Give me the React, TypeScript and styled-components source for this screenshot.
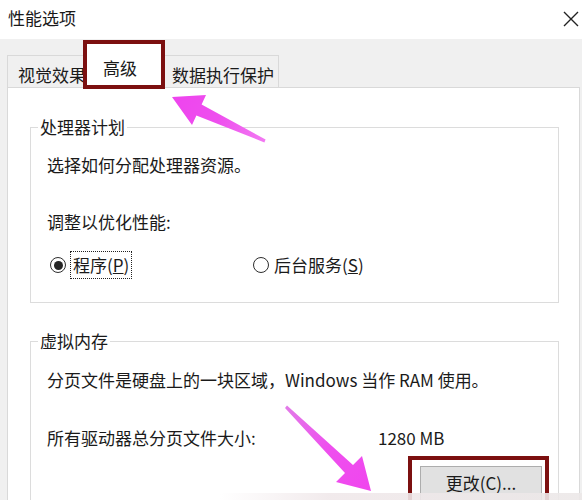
import React from 'react';
import styled, { createGlobalStyle } from 'styled-components';

const Global = createGlobalStyle`
  html, body { margin: 0; padding: 0; background: #f0f0f0; }
  body { font-family: "Noto Sans CJK SC", "Microsoft YaHei", sans-serif; color: #1a1a1a; }
  #root { width: 582px; height: 500px; overflow: hidden; }
`;

const Window = styled.div`
  position: relative;
  width: 582px;
  height: 500px;
  overflow: hidden;
  background: #f0f0f0;
  display: flex;
  flex-direction: column;
  font-size: 17px;
  line-height: 22px;
`;

const TitleBar = styled.div`
  box-sizing: border-box;
  height: 39px;
  flex: none;
  background: #fff;
  display: flex;
  align-items: center;
  justify-content: space-between;
  padding: 0 3px 4px 8px;
`;

const Close = styled.svg`
  width: 16px;
  height: 16px;
  margin-top: 2px;
`;

const TabStrip = styled.div`
  flex: none;
  height: 48px;
  display: flex;
  align-items: flex-end;
  padding-left: 7px;
  position: relative;
  z-index: 1;
`;

const Tab = styled.div<{ $w: number; $pl: number; $active?: boolean }>`
  box-sizing: border-box;
  width: ${(p) => p.$w}px;
  padding-left: ${(p) => p.$pl}px;
  border: 1px solid #d9d9d9;
  border-bottom: none;
  white-space: nowrap;
  background: ${(p) => (p.$active ? '#fff' : '#f0f0f0')};
  height: ${(p) => (p.$active ? 45 : 32)}px;
  padding-top: ${(p) => (p.$active ? 13 : 8)}px;
  margin: ${(p) => (p.$active ? '0 -2px -1px -2px' : '0')};
  position: relative;
  z-index: ${(p) => (p.$active ? 2 : 1)};
`;

const Panel = styled.div`
  flex: 1;
  background: #fff;
  border: 1px solid #d9d9d9;
  margin: 0 2px 0 7px;
  padding: 28px 20px 0 22px;
  display: flex;
  flex-direction: column;
`;

const Group = styled.fieldset<{ $mt?: number }>`
  margin: ${(p) => p.$mt ?? 0}px 0 0 0;
  padding: 0 0 ${(p) => (p.$mt ? 40 : 23)}px 16px;
  border: 1px solid #dcdcdc;
  min-width: 0;
`;

const Legend = styled.legend`
  padding: 0 2px;
  margin-left: -9px;
  line-height: 22px;
`;

const Line = styled.div<{ $mt: number }>`
  margin-top: ${(p) => p.$mt}px;
  height: 22px;
  white-space: nowrap;
`;

const RadioRow = styled.div`
  margin-top: 18px;
  margin-left: 3px;
  display: flex;
  align-items: center;
  height: 28px;
`;

const Option = styled.div<{ $w?: number }>`
  display: flex;
  align-items: center;
  gap: ${(p) => (p.$w ? 4 : 2)}px;
  width: ${(p) => (p.$w ? `${p.$w}px` : 'auto')};
`;

const Circle = styled.span<{ $on?: boolean }>`
  box-sizing: border-box;
  flex: none;
  width: 16px;
  height: 16px;
  border-radius: 50%;
  border: 1.2px solid #2e2e2e;
  display: flex;
  align-items: center;
  justify-content: center;
  &::after {
    content: '';
    width: 9px;
    height: 9px;
    border-radius: 50%;
    background: ${(p) => (p.$on ? '#262626' : 'transparent')};
  }
`;

const Label = styled.span<{ $focus?: boolean }>`
  border: 1px dotted ${(p) => (p.$focus ? '#222' : 'transparent')};
  padding: 0 2px;
  line-height: 26px;
  white-space: nowrap;
`;

const SizeRow = styled.div`
  margin-top: 36px;
  display: flex;
  height: 22px;
  white-space: nowrap;
`;

const SizeLabel = styled.span`
  width: 331px;
`;

const Button = styled.div`
  box-sizing: border-box;
  margin-top: 17px;
  margin-left: 373px;
  width: 122px;
  height: 38px;
  background: #e1e1e1;
  border: 1px solid #adadad;
  display: flex;
  justify-content: center;
  padding-top: 5px;
  white-space: nowrap;
`;

const Highlight = styled.div<{ $x: number; $y: number; $w: number; $h: number }>`
  position: absolute;
  left: ${(p) => p.$x}px;
  top: ${(p) => p.$y}px;
  width: ${(p) => p.$w}px;
  height: ${(p) => p.$h}px;
  box-sizing: border-box;
  border: 4px solid #7c1010;
  z-index: 5;
  pointer-events: none;
`;

const Arrows = styled.svg`
  position: absolute;
  left: 0;
  top: 0;
  width: 582px;
  height: 500px;
  z-index: 6;
  pointer-events: none;
`;

const BottomBlur = styled.div`
  position: absolute;
  left: 220px;
  right: 0;
  bottom: 0;
  height: 7px;
  background: linear-gradient(to right, rgba(240, 234, 236, 0), rgba(240, 232, 234, 0.9) 30%, rgba(236, 232, 232, 0.9));
  z-index: 7;
`;

export default function App() {
  return (
    <Window>
      <Global />
      <TitleBar>
        <span>性能选项</span>
        <Close viewBox="0 0 16 16">
          <path d="M1 1 L15 15 M15 1 L1 15" stroke="#222" strokeWidth="1.4" fill="none" />
        </Close>
      </TitleBar>
      <TabStrip>
        <Tab $w={80} $pl={10}>视觉效果</Tab>
        <Tab $w={77} $pl={17} $active>高级</Tab>
        <Tab $w={119} $pl={11}>数据执行保护</Tab>
      </TabStrip>
      <Panel>
        <Group>
          <Legend>处理器计划</Legend>
          <Line $mt={16}>选择如何分配处理器资源。</Line>
          <Line $mt={35}>调整以优化性能:</Line>
          <RadioRow>
            <Option $w={203}>
              <Circle $on />
              <Label $focus>
                程序(<u>P</u>)
              </Label>
            </Option>
            <Option>
              <Circle />
              <Label>
                后台服务(<u>S</u>)
              </Label>
            </Option>
          </RadioRow>
        </Group>
        <Group $mt={27}>
          <Legend>虚拟内存</Legend>
          <Line $mt={17}>分页文件是硬盘上的一块区域，Windows 当作 RAM 使用。</Line>
          <SizeRow>
            <SizeLabel>所有驱动器总分页文件大小:</SizeLabel>
            <span>1280 MB</span>
          </SizeRow>
          <Button>更改(C)...</Button>
        </Group>
      </Panel>
      <Highlight $x={83} $y={40} $w={82} $h={49} />
      <Highlight $x={408} $y={456} $w={141} $h={60} />
      <Arrows viewBox="0 0 582 500">
        <defs>
          <linearGradient id="a1" x1="265" y1="141" x2="172" y2="97" gradientUnits="userSpaceOnUse">
            <stop offset="0" stopColor="#f27af2" />
            <stop offset="0.5" stopColor="#ee4fee" />
            <stop offset="1" stopColor="#ee44ee" />
          </linearGradient>
          <linearGradient id="a2" x1="286" y1="407" x2="370" y2="490" gradientUnits="userSpaceOnUse">
            <stop offset="0" stopColor="#e27be8" />
            <stop offset="0.5" stopColor="#ee4fee" />
            <stop offset="1" stopColor="#f046ee" />
          </linearGradient>
        </defs>
        <polygon
          points="172,97 206,95 201.6,104.6 265.6,139.6 264.4,142.4 196.4,115.4 192,125"
          fill="url(#a1)"
        />
        <polygon
          points="287,405.5 353,465 362,456 371,491 336,482 345,473 285,408"
          fill="url(#a2)"
        />
      </Arrows>
      <BottomBlur />
    </Window>
  );
}
